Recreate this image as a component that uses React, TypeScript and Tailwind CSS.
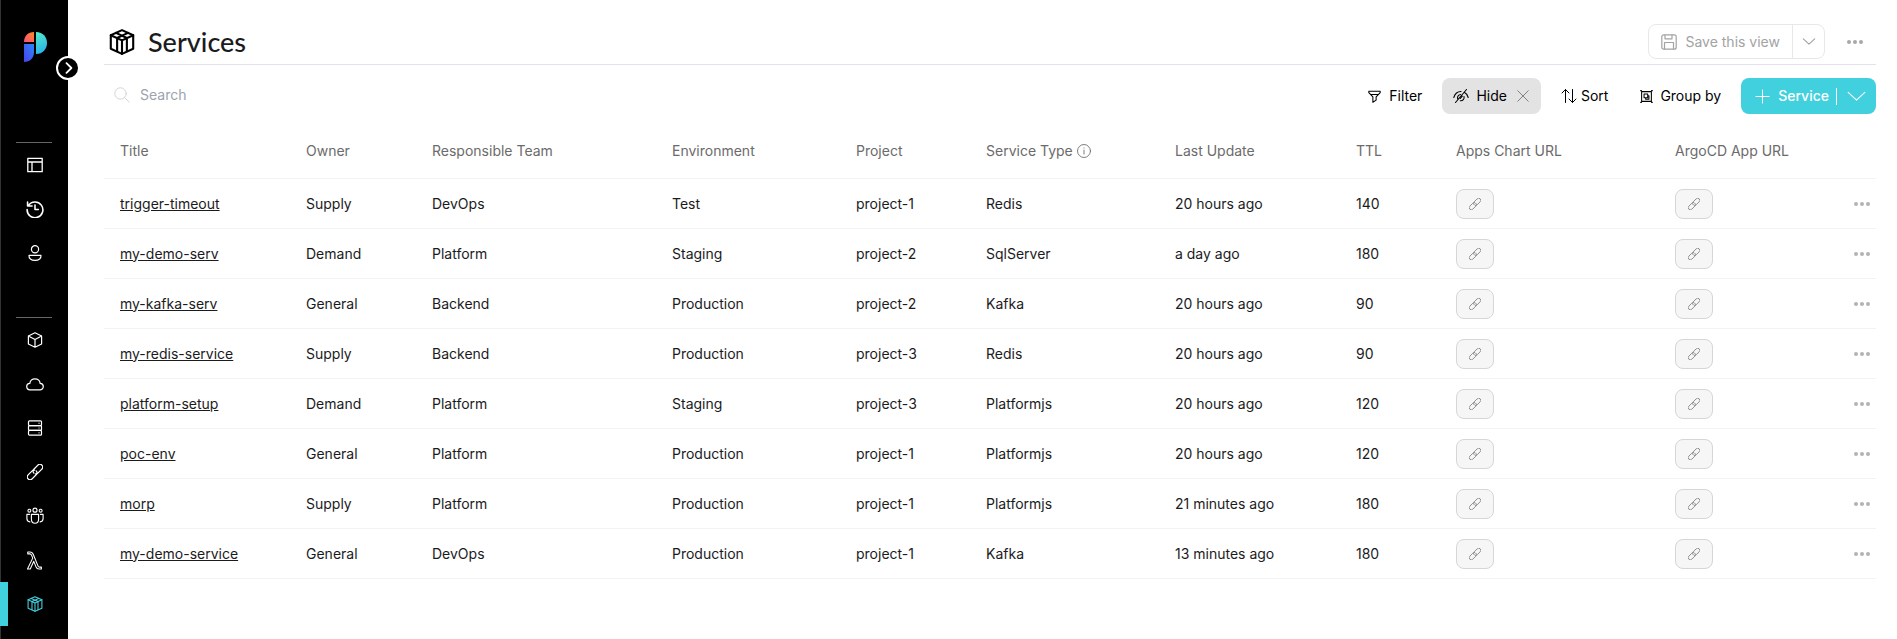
import type { ReactNode } from "react";

type IconProps = { className?: string; width?: string; children?: ReactNode };

function Icon({ className = "size-4", width = "1.2", children }: IconProps) {
  return (
    <svg
      viewBox="0 0 16 16"
      className={className}
      fill="none"
      stroke="currentColor"
      strokeWidth={width}
      strokeLinecap="round"
      strokeLinejoin="round"
      aria-hidden="true"
    >
      {children}
    </svg>
  );
}

function Package({ className, width = "1.1" }: IconProps) {
  return (
    <Icon className={className} width={width}>
      <path d="M8 .7 14.900 3.800v8.400L8 15.300 1.100 12.200V3.800Z" />
      <path d="M1.100 3.800 8 7 14.900 3.800M8 7v8.300M4.300 2.400 11 5.500v8.200M11.700 2.400 5 5.500v8.200" />
    </Icon>
  );
}

function Link({ className, width = "1.2" }: IconProps) {
  return (
    <Icon className={className} width={width}>
      <g transform="rotate(-45 8 8)">
        <path d="M9.600 8A2.800 2.800 0 0 1 6.800 10.800H1.100a2.800 2.800 0 0 1 0-5.600H6.800A2.800 2.800 0 0 1 9 6.300" />
        <path d="M6.400 8A2.800 2.800 0 0 1 9.200 5.200h5.700a2.800 2.800 0 0 1 0 5.600H9.200A2.800 2.800 0 0 1 7 9.700" />
      </g>
    </Icon>
  );
}

function Dots({ className = "h-4 w-4" }: IconProps) {
  return (
    <svg viewBox="0 0 16 16" className={className} fill="currentColor" aria-hidden="true">
      <circle cx="2" cy="8" r="2" />
      <circle cx="8" cy="8" r="2" />
      <circle cx="14" cy="8" r="2" />
    </svg>
  );
}

const topNav: [string, ReactNode][] = [
  ["Pages", <Icon width="1.300"><path d="M.8 1.300h14.400v13.400H.8zM.8 5h14.400M5 5v9.500" /></Icon>],
  ["Audit log", <Icon className="size-[18px]" width="1.4"><path d="M2.200 4.800A7 7 0 1 1 1 8.500M1.400 1.800v3.600h4M8 4.500v4h3" /></Icon>],
  ["Users", <Icon className="size-4"><circle cx="8" cy="4.3" r="3.6" /><path d="M2 10.300h12c.3 3-2 5-6 5s-6.300-2-6-5Z" /></Icon>],
];

const bottomNav: [string, ReactNode][] = [
  ["Entities", <Icon><path d="M8 .8 14.6 4v8L8 15.200 1.400 12V4ZM1.400 4 8 7.500 14.600 4M8 7.500v7.700" /></Icon>],
  ["Cloud", <Icon className="size-[18px]" width="1.1"><path d="M3.700 13.200a2.900 2.900 0 0 1-.3-5.800c.2-2.400 2.300-4 4.600-4s4.400 1.600 4.600 4a2.900 2.900 0 0 1-.3 5.800Z" /></Icon>],
  ["Clusters", <Icon><rect x="1.500" y=".8" width="13" height="4.800" rx="1" /><rect x="1.500" y="5.600" width="13" height="4.800" rx="1" /><rect x="1.500" y="10.400" width="13" height="4.800" rx="1" /><path d="M12 3.200h.1M12 8h.1M12 12.800h.1" /></Icon>],
  ["Links", <Link className="size-4" width="1.300" />],
  ["Teams", <Icon className="size-[18px]" width="1"><circle cx="8" cy="2.800" r="1.800" /><circle cx="3" cy="3.300" r="1.300" /><circle cx="13" cy="3.300" r="1.300" /><path d="M4.800 6.500h6.400v4.300c0 2.300-1.200 3.600-3.200 3.600s-3.200-1.300-3.200-3.600ZM3.200 6.500H.8v3.800c0 1.700.8 2.700 2.600 2.900M12.800 6.500h2.400v3.800c0 1.700-.8 2.700-2.600 2.900" /></Icon>],
  ["Lambdas", <Icon className="size-[19px]" width=".9"><path d="M2.300.8h1.900c1.700 0 2.300.8 2.900 2.300l3.900 9.600c.3.700.7.900 1.300.9h1.500v1.600h-2c-1.500 0-2-.6-2.600-2L7.400 8.700l-3 6.500H2.100L6.500 6 5.600 3.700c-.4-1-.7-1.300-1.500-1.300H2.300Z" /></Icon>],
  ["Services", <Package />],
];

function NavItem({ label, icon, active }: { label: string; icon: ReactNode; active?: boolean }) {
  return (
    <li>
      <a
        href="#"
        aria-label={label}
        aria-current={active ? "page" : undefined}
        className={
          active
            ? "flex h-11 items-center justify-center border-l-8 border-[#40d0de] pr-[7px] text-[#40d0de]"
            : "flex h-11 items-center justify-center pl-px text-white"
        }
      >
        {icon}
      </a>
    </li>
  );
}

function Sidebar() {
  return (
    <aside className="relative w-[68px] shrink-0 bg-black shadow-[inset_1px_0_0_#333]">
      <a href="#" aria-label="Home" className="flex h-[142px] justify-center pt-8 pl-[3px]">
        <svg viewBox="0 0 23 30" className="h-[30px] w-[23px]" aria-hidden="true">
          <defs>
            <linearGradient id="warm" x1="0" y1="1" x2="1" y2="0">
              <stop stopColor="#fb4f83" />
              <stop offset="1" stopColor="#fd8a1e" />
            </linearGradient>
            <linearGradient id="cool" x1="0" y1="0" x2=".3" y2="1">
              <stop stopColor="#55edc8" />
              <stop offset="1" stopColor="#2cb5ea" />
            </linearGradient>
            <linearGradient id="deep" x1="1" y1="0" x2="0" y2="1">
              <stop stopColor="#2b87fb" />
              <stop offset="1" stopColor="#4b41ee" />
            </linearGradient>
          </defs>
          <path d="M10 0v10H0C0 4 4 0 10 0Z" fill="url(#warm)" />
          <path d="M12 0c7 0 11 5 11 11s-4 11-11 11Z" fill="url(#cool)" />
          <path d="M0 12h10v8c0 6-4 10-10 10Z" fill="url(#deep)" />
        </svg>
      </a>
      <nav aria-label="Main">
        <hr className="mx-4 border-[#666]" />
        <ul>
          {topNav.map(([label, icon]) => (
            <NavItem key={label} label={label} icon={icon} />
          ))}
        </ul>
        <hr className="mx-4 mt-[42px] border-[#666]" />
        <ul>
          {bottomNav.map(([label, icon]) => (
            <NavItem key={label} label={label} icon={icon} active={label === "Services"} />
          ))}
        </ul>
      </nav>
      <button
        type="button"
        aria-label="Expand sidebar"
        className="absolute top-14 -right-3 flex size-6 items-center justify-center rounded-full border-2 border-white bg-black text-white"
      >
        <Icon className="size-3" width="2.400"><path d="m6 1.500 6.500 6.500L6 14.500" /></Icon>
      </button>
    </aside>
  );
}

const columns: [string, string][] = [
  ["Title", "w-[186px]"],
  ["Owner", "w-[126px]"],
  ["Responsible Team", "w-[240px]"],
  ["Environment", "w-[184px]"],
  ["Project", "w-[130px]"],
  ["Service Type", "w-[189px]"],
  ["Last Update", "w-[181px]"],
  ["TTL", "w-[100px]"],
  ["Apps Chart URL", "w-[219px]"],
  ["ArgoCD App URL", "w-[157px]"],
];

const rows = [
  ["trigger-timeout", "Supply", "DevOps", "Test", "project-1", "Redis", "20 hours ago", "140"],
  ["my-demo-serv", "Demand", "Platform", "Staging", "project-2", "SqlServer", "a day ago", "180"],
  ["my-kafka-serv", "General", "Backend", "Production", "project-2", "Kafka", "20 hours ago", "90"],
  ["my-redis-service", "Supply", "Backend", "Production", "project-3", "Redis", "20 hours ago", "90"],
  ["platform-setup", "Demand", "Platform", "Staging", "project-3", "Platformjs", "20 hours ago", "120"],
  ["poc-env", "General", "Platform", "Production", "project-1", "Platformjs", "20 hours ago", "120"],
  ["morp", "Supply", "Platform", "Production", "project-1", "Platformjs", "21 minutes ago", "180"],
  ["my-demo-service", "General", "DevOps", "Production", "project-1", "Kafka", "13 minutes ago", "180"],
];

const cell = "border-b border-[#f3f3f3] px-4";

function LinkButton({ label }: { label: string }) {
  return (
    <button
      type="button"
      aria-label={label}
      className="flex h-[30px] w-[38px] items-center justify-center rounded-lg border border-[#d6d6d6] bg-[#f6f6f6] text-[#8a8a8a]"
    >
      <Link className="size-3" />
    </button>
  );
}

function ServicesTable() {
  return (
    <table className="w-full table-fixed border-separate border-spacing-0 text-left">
      <thead>
        <tr className="h-[55px] text-[#6b6b6b]">
          {columns.map(([name, width]) => (
            <th key={name} scope="col" className={`${cell} ${width} font-normal whitespace-nowrap`}>
              <span className="flex items-center gap-1">
                {name}
                {name === "Service Type" && (
                  <Icon className="size-[14px]" width="1"><circle cx="8" cy="8" r="7.400" /><path d="M8 7v4.500M8 4.500v.2" /></Icon>
                )}
              </span>
            </th>
          ))}
          <th className={cell} aria-label="Actions" />
        </tr>
      </thead>
      <tbody>
        {rows.map(([title, ...values]) => (
          <tr key={title} className="h-[50px]">
            <td className={cell}>
              <a href="#" className="underline">{title}</a>
            </td>
            {values.map((value, i) => (
              <td key={i} className={cell}>{value}</td>
            ))}
            <td className={cell}><LinkButton label={`Apps chart of ${title}`} /></td>
            <td className={cell}><LinkButton label={`ArgoCD app of ${title}`} /></td>
            <td className="border-b border-[#f3f3f3] pr-[6px]">
              <button type="button" aria-label={`Actions for ${title}`} className="ml-auto flex text-[#b3b3b3]">
                <Dots />
              </button>
            </td>
          </tr>
        ))}
      </tbody>
    </table>
  );
}

const tool = "flex h-9 items-center rounded-lg";

export default function App() {
  return (
    <div className="flex min-h-screen bg-white font-[Inter,sans-serif] text-sm text-[#1b1b1d]">
      <Sidebar />
      <main className="min-w-0 flex-1 pr-[21px] pl-9">
        <header className="flex h-[65px] items-center border-b border-[#e2e2ea] pt-[19px]">
          <Package className="ml-[5px] size-[26px] text-black" width="1.300" />
          <h1 className="ml-[13px] font-[Lato,sans-serif] text-[27px] leading-8 font-medium">Services</h1>
          <div className="ml-auto flex h-[35px] rounded-lg border border-[#e8e8e8] text-[#a3a3a3]">
            <button type="button" className="flex items-center gap-2 px-3">
              <Icon><rect x=".8" y=".8" width="14.400" height="14.400" rx="2" /><path d="M4 1v3.800h7V1M3.500 15V8.500h9V15" /></Icon>
              Save this view
            </button>
            <button type="button" aria-label="Save options" className="flex w-8 items-center justify-center border-l border-[#e8e8e8]">
              <Icon className="size-[14px]" width="1.300"><path d="m1.500 4.500 6.500 6 6.500-6" /></Icon>
            </button>
          </div>
          <button type="button" aria-label="More" className="mr-[13px] ml-[22px] text-[#a8a8a8]"><Dots /></button>
        </header>
        <div className="flex h-[59px] items-center">
          <label className="ml-[10px] flex items-center gap-[10px]">
            <Icon className="size-4 text-[#d4d4d4]" width="1"><circle cx="6.500" cy="6.500" r="5.700" /><path d="m10.700 10.700 4.500 4.500" /></Icon>
            <input type="search" aria-label="Search" placeholder="Search" className="w-60 outline-none placeholder:text-[#9ca3af]" />
          </label>
          <div className="ml-auto flex items-center pt-[3px] text-black">
            <button type="button" className={`${tool} mr-5 gap-2`}>
              <Icon className="size-[13px]" width="1.300"><path d="M1 1.500h14v1.800L10 8.500v4L6 15V8.500L1 3.300ZM4 5.500h8" /></Icon>
              Filter
            </button>
            <button type="button" className={`${tool} mr-5 bg-[#e3e3e3] pr-3 pl-[11px]`}>
              <Icon className="mr-[7px] size-4" width="1.100"><path d="M.8 9.500C2 5.500 4.800 3.500 8 3.500M11.300 4.300c2 1 3.300 2.700 3.900 5.200M2.500 14.500l11-13M5 11.500A3.300 3.300 0 0 1 7.500 6.500M11 8.500a3.300 3.300 0 0 1-3.700 4.200M7.300 10.500l2-2.300" /></Icon>
              Hide
              <Icon className="ml-[10px] size-3 text-[#777]"><path d="m1 1 14 14M15 1 1 15" /></Icon>
            </button>
            <button type="button" className={`${tool} mr-8 gap-1`}>
              <Icon className="size-4" width="1"><path d="M4.500 14.500V1.500M1 5l3.500-3.500L8 5M11.500 1.500v13M8 11l3.500 3.500L15 11" /></Icon>
              Sort
            </button>
            <button type="button" className={`${tool} mr-5 gap-[7px]`}>
              <Icon className="size-[13px]" width="1.300"><path d="M2 2h12v12H2zM.8.8h1M14.200.8h1M.8 15.200h1M14.200 15.200h1M5 5h4.500v4.500H5zM9.500 7H11v4.500H7V9.500" /></Icon>
              Group by
            </button>
            <div className={`${tool} bg-[#40d0de] font-medium text-white`}>
              <button type="button" className="flex items-center gap-2 pr-[7px] pl-[14px]">
                <Icon className="size-[15px]" width="1.100"><path d="M8 1v14M1 8h14" /></Icon>
                Service
              </button>
              <span className="h-[17px] w-px bg-white" />
              <button type="button" aria-label="Service options" className="px-[10px]">
                <Icon className="size-[19px]" width="1"><path d="m1 4.500 7 6.500 7-6.500" /></Icon>
              </button>
            </div>
          </div>
        </div>
        <ServicesTable />
      </main>
    </div>
  );
}
